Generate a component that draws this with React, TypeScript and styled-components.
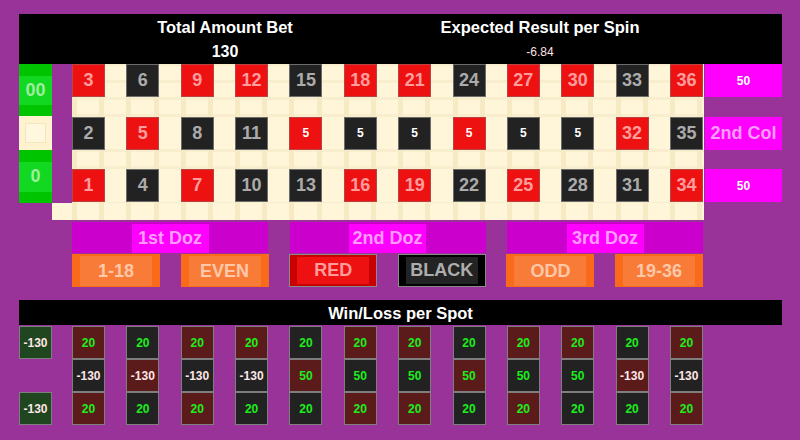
import React from "react";
import styled, { createGlobalStyle, css } from "styled-components";

const GlobalStyle = createGlobalStyle`
  html, body {
    margin: 0;
    padding: 0;
    background: #993399;
    overflow: hidden;
  }
  * {
    box-sizing: border-box;
  }
`;

const REDS = new Set([1, 3, 5, 7, 9, 12, 14, 16, 18, 19, 21, 23, 25, 27, 30, 32, 34, 36]);
const COLS = Array.from({ length: 12 }, (_, i) => i);
const ROWS = [3, 2, 1];

const font = css`
  font-family: "Liberation Sans", Arial, sans-serif;
  font-weight: 700;
`;

// felt: faint vertical bands every half column, thinner horizontal ones by the rows
const cream = css`
  background-color: #fff5d8;
  background-image: repeating-linear-gradient(
      90deg,
      #f5eac3 0 5px,
      transparent 5px 27.18px
    ),
    repeating-linear-gradient(
      180deg,
      #f8eecd 0 3px,
      transparent 3px 17px,
      #f8eecd 17px 20px,
      transparent 20px 52.5px
    );
`;

const Page = styled.div`
  ${font};
  width: 800px;
  height: 440px;
  padding: 14px 18px 0 19px;
  display: flex;
  flex-direction: column;
  background: #993399;
`;

const Header = styled.div`
  height: 50px;
  background: #000;
  color: #fff;
  display: grid;
  grid-template-columns: 412px 218px 1fr;
`;

const HeaderCell = styled.div`
  display: flex;
  flex-direction: column;
  align-items: center;
`;

const HeaderTitle = styled.div`
  font-size: 16.5px;
  line-height: 26px;
  white-space: nowrap;
`;

const HeaderValue = styled.div<{ $small?: boolean }>`
  line-height: 24px;
  font-size: ${(p) => (p.$small ? "12px" : "16px")};
  font-weight: ${(p) => (p.$small ? 400 : 700)};
  color: ${(p) => (p.$small ? "#ffe2e2" : "#fff")};
`;

const Board = styled.div`
  display: grid;
  grid-template-columns: 33px 20px 632px 1px 77px;
  grid-template-rows: 139px 17px;
`;

const ZeroCol = styled.div`
  grid-column: 1;
  grid-row: 1;
  display: flex;
  flex-direction: column;
`;

const GreenCell = styled.div<{ $h: number }>`
  height: ${(p) => p.$h}px;
  background: linear-gradient(
    180deg,
    #00c400 0 12px,
    #12d822 12px calc(100% - 11px),
    #00c400 calc(100% - 11px)
  );
  color: #9dee9d;
  font-size: 18px;
  display: flex;
  align-items: center;
  justify-content: center;
`;

const BlankCell = styled.div`
  height: 34px;
  background: #fff2cf;
  display: flex;
  align-items: center;
  justify-content: center;
`;

const BlankInner = styled.div`
  width: 21px;
  height: 20px;
  background: #fff7de;
  border: 1px solid #f3e6be;
`;

const NumberGrid = styled.div`
  grid-column: 3;
  grid-row: 1;
  ${cream};
  background-position: 0 33px;
  display: grid;
  grid-template-columns: repeat(12, 33px);
  grid-template-rows: repeat(3, 33px);
  column-gap: 21.36px;
  row-gap: 19.5px;
  align-content: start;
`;

const NumberCell = styled.div<{ $red: boolean; $bet?: boolean }>`
  border: 1px solid ${(p) => (p.$red ? "#b84444" : "#6d6d6d")};
  background: ${(p) => (p.$red ? "#ee1111" : "#222")};
  color: ${(p) => (p.$bet ? "#fff" : p.$red ? "#ff9c9c" : "#ababab")};
  font-size: ${(p) => (p.$bet ? "12px" : "18px")};
  display: flex;
  align-items: center;
  justify-content: center;
`;

const BottomStrip = styled.div`
  grid-column: 2 / 4;
  grid-row: 2;
  background-color: #fff5d8;
  background-image: repeating-linear-gradient(
    90deg,
    #f5eac3 0 5px,
    transparent 5px 27.18px
  );
  background-position: 20px 0;
  background-size: calc(100% - 20px) 100%;
  background-repeat: no-repeat;
`;

const ColumnBets = styled.div`
  grid-column: 5;
  grid-row: 1;
  display: grid;
  grid-template-rows: repeat(3, 33px);
  row-gap: 19.5px;
`;

const ColumnBet = styled.div<{ $label?: boolean }>`
  background: #ff00ff;
  color: ${(p) => (p.$label ? "#ff9cff" : "#fff")};
  font-size: ${(p) => (p.$label ? "18px" : "12px")};
  display: flex;
  align-items: center;
  justify-content: center;
`;

const DozenRow = styled.div`
  margin-top: 2px;
  padding-left: 53px;
  display: grid;
  grid-template-columns: repeat(3, 196px);
  column-gap: 21.5px;
  height: 31px;
`;

const Dozen = styled.div`
  background: #cc00cc;
  display: flex;
  align-items: flex-end;
  justify-content: center;
`;

const DozenLabel = styled.div`
  width: 77px;
  height: 29px;
  background: #ff00ff;
  color: #ff9cff;
  font-size: 18px;
  display: flex;
  align-items: center;
  justify-content: center;
  white-space: nowrap;
`;

const EvenRow = styled.div`
  margin-top: 1px;
  padding-left: 53px;
  display: grid;
  grid-template-columns: repeat(6, 88px);
  column-gap: 20.6px;
  height: 33px;
`;

type Kind = "orange" | "red" | "black";

const kinds: Record<Kind, { outer: string; inner: string; text: string; border: string }> = {
  orange: { outer: "#f96b1b", inner: "#f97b38", text: "#ffc8a8", border: "#f96b1b" },
  red: { outer: "#c80000", inner: "#ee1111", text: "#ff9c9c", border: "#8a8a8a" },
  black: { outer: "#000", inner: "#232323", text: "#adadad", border: "#8a8a8a" },
};

const EvenBet = styled.div<{ $kind: Kind }>`
  display: flex;
  padding: ${(p) => (p.$kind === "orange" ? "1px 7px 0" : "2px 7px")};
  background: ${(p) => kinds[p.$kind].outer};
  border: 1px solid ${(p) => kinds[p.$kind].border};
`;

const EvenInner = styled.div<{ $kind: Kind }>`
  flex: 1;
  background: ${(p) => kinds[p.$kind].inner};
  color: ${(p) => kinds[p.$kind].text};
  font-size: 18px;
  display: flex;
  align-items: center;
  justify-content: center;
`;

const WinHeader = styled.div`
  margin-top: 13px;
  height: 25px;
  padding-top: 1px;
  background: #000;
  color: #fff;
  font-size: 16.5px;
  line-height: 25px;
  text-align: center;
`;

const WinArea = styled.div`
  margin-top: 1px;
  display: flex;
  gap: 20px;
`;

const WinZeroCol = styled.div`
  display: grid;
  grid-template-rows: repeat(3, 33px);
  width: 33px;
`;

const WinGrid = styled.div`
  display: grid;
  grid-template-columns: repeat(12, 33px);
  grid-template-rows: repeat(3, 33px);
  column-gap: 21.36px;
`;

type Tone = "red" | "black" | "green";

const tones: Record<Tone, string> = {
  red: "#5c1b1b",
  black: "#222",
  green: "#1f461f",
};

const WinCell = styled.div<{ $tone: Tone; $loss: boolean }>`
  border: 1px solid #7e7e7e;
  background: ${(p) => tones[p.$tone]};
  color: ${(p) => (p.$loss ? "#ffe6e6" : "#1cee1c")};
  font-size: 12px;
  display: flex;
  align-items: center;
  justify-content: center;
`;

function numberAt(row: number, col: number) {
  return col * 3 + row;
}

function winFor(row: number, col: number) {
  if (row === 2 && (col < 4 || col >= 10)) return -130;
  if (row === 2) return 50;
  return 20;
}

export default function App() {
  const dozens = ["1st Doz", "2nd Doz", "3rd Doz"];
  const evens: { label: string; kind: Kind }[] = [
    { label: "1-18", kind: "orange" },
    { label: "EVEN", kind: "orange" },
    { label: "RED", kind: "red" },
    { label: "BLACK", kind: "black" },
    { label: "ODD", kind: "orange" },
    { label: "19-36", kind: "orange" },
  ];

  return (
    <>
      <GlobalStyle />
      <Page>
        <Header>
          <HeaderCell>
            <HeaderTitle>Total Amount Bet</HeaderTitle>
            <HeaderValue>130</HeaderValue>
          </HeaderCell>
          <HeaderCell>
            <HeaderTitle>Expected Result per Spin</HeaderTitle>
            <HeaderValue $small>-6.84</HeaderValue>
          </HeaderCell>
        </Header>

        <Board>
          <ZeroCol>
            <GreenCell $h={52}>00</GreenCell>
            <BlankCell>
              <BlankInner />
            </BlankCell>
            <GreenCell $h={53}>0</GreenCell>
          </ZeroCol>

          <NumberGrid>
            {ROWS.map((row) =>
              COLS.map((col) => {
                const n = numberAt(row, col);
                const bet = row === 2 && col >= 4 && col < 10;
                return (
                  <NumberCell key={n} $red={REDS.has(n)} $bet={bet}>
                    {bet ? 5 : n}
                  </NumberCell>
                );
              })
            )}
          </NumberGrid>

          <BottomStrip />

          <ColumnBets>
            <ColumnBet>50</ColumnBet>
            <ColumnBet $label>2nd Col</ColumnBet>
            <ColumnBet>50</ColumnBet>
          </ColumnBets>
        </Board>

        <DozenRow>
          {dozens.map((d) => (
            <Dozen key={d}>
              <DozenLabel>{d}</DozenLabel>
            </Dozen>
          ))}
        </DozenRow>

        <EvenRow>
          {evens.map((e) => (
            <EvenBet key={e.label} $kind={e.kind}>
              <EvenInner $kind={e.kind}>{e.label}</EvenInner>
            </EvenBet>
          ))}
        </EvenRow>

        <WinHeader>Win/Loss per Spot</WinHeader>

        <WinArea>
          <WinZeroCol>
            <WinCell $tone="green" $loss>
              -130
            </WinCell>
            <div />
            <WinCell $tone="green" $loss>
              -130
            </WinCell>
          </WinZeroCol>
          <WinGrid>
            {ROWS.map((row) =>
              COLS.map((col) => {
                const n = numberAt(row, col);
                const v = winFor(row, col);
                return (
                  <WinCell key={n} $tone={REDS.has(n) ? "red" : "black"} $loss={v < 0}>
                    {v}
                  </WinCell>
                );
              })
            )}
          </WinGrid>
        </WinArea>
      </Page>
    </>
  );
}
